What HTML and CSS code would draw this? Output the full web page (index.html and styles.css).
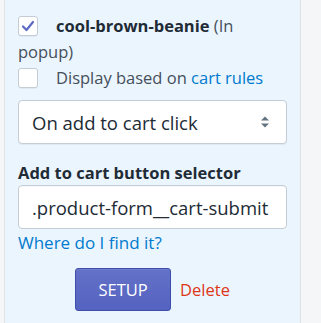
FILE: index.html
```html
<!DOCTYPE html>
<html lang="en">
<head>
  <meta charset="UTF-8" />
  <title>Popup settings</title>
  <link rel="stylesheet" href="styles.css">
</head>
<body>

<div class="panel">

  <div class="check-row">
    <span class="checkbox checked">
      <svg width="14" height="14" viewBox="0 0 14 14"><path d="M2 7.5 L5.5 11 L12 3" fill="none" stroke="#5c6ac4" stroke-width="2.2" stroke-linecap="round" stroke-linejoin="round"/></svg>
    </span><b>cool-brown-beanie</b> (In popup)
  </div>

  <div class="check-row">
    <span class="checkbox"></span>Display based on <a href="#">cart rules</a>
  </div>

  <div class="select-wrap">
    <select class="select">
      <option>On add to cart click</option>
      <option>On page load</option>
    </select>
    <svg class="select-arrows" width="10" height="14" viewBox="0 0 10 14">
      <path d="M1 5.5 L5 1.5 L9 5.5 Z" fill="#637381"/>
      <path d="M1 8.5 L5 12.5 L9 8.5 Z" fill="#637381"/>
    </svg>
  </div>

  <label class="field-label" for="selector">Add to cart button selector</label>
  <input class="text-input" type="text" id="selector" value=".product-form__cart-submit">
  <a class="help-link" href="#">Where do I find it?</a>

  <div class="actions">
    <button class="btn-primary">SETUP</button>
    <a class="delete-link" href="#">Delete</a>
  </div>

</div>

</body>
</html>
```

FILE: styles.css
```css
body {
  font-family: "Open Sans", Arial, sans-serif;
  background-color: #f4f6f8;
  margin: 0;
  padding: 0;
  color: #212b36;
}

.panel {
  margin-left: 4px;
  min-height: 323px;
  box-sizing: border-box;
  width: 297px;
  padding: 13px 13px 0 13px;
  background-color: #ebf5fe;
  border-left: 1px solid #dfe3e8;
  border-right: 1px solid #dfe3e8;
  font-size: 16.5px;
}

.check-row {
  line-height: 26px;
  color: #454f5b;
}

.check-row b {
  color: #212b36;
}

.checkbox {
  display: inline-block;
  box-sizing: border-box;
  width: 20px;
  height: 20px;
  margin-right: 18px;
  vertical-align: -4px;
  background: white;
  border: 1px solid #c4cdd5;
  border-radius: 3px;
  box-shadow: 0 1px 0 rgba(22, 29, 37, 0.05);
  position: relative;
}

.checkbox svg {
  position: absolute;
  left: 2px;
  top: 2px;
}

a {
  color: #007ace;
  text-decoration: none;
}

.select-wrap {
  position: relative;
  margin-top: 9px;
}

.select {
  display: block;
  appearance: none;
  -webkit-appearance: none;
  width: 100%;
  height: 44px;
  padding: 0 13px;
  border: 1px solid #c4cdd5;
  border-radius: 4px;
  background: white;
  font-family: inherit;
  font-size: 18.5px;
  color: #212b36;
  box-shadow: 0 1px 0 rgba(22, 29, 37, 0.05);
}

.select-arrows {
  position: absolute;
  right: 17px;
  top: 15px;
}

.field-label {
  display: block;
  margin-top: 18px;
  font-weight: bold;
  font-size: 16.5px;
  line-height: 22px;
}

.text-input {
  display: block;
  box-sizing: border-box;
  width: 100%;
  height: 44px;
  margin: 1px 0 0;
  padding: 0 13px;
  border: 1px solid #c4cdd5;
  border-radius: 4px;
  font-family: inherit;
  font-size: 18.5px;
  color: #212b36;
  box-shadow: inset 0 1px 0 rgba(99, 115, 129, 0.05);
}

.help-link {
  display: block;
  margin-top: 3px;
  font-size: 17px;
  line-height: 22px;
}

.actions {
  display: flex;
  justify-content: center;
  align-items: center;
  gap: 9px;
  margin-top: 14px;
}

.btn-primary {
  width: 96px;
  height: 43px;
  border: 1px solid #3f4eae;
  border-radius: 3px;
  background: linear-gradient(#6371c7, #5563c1);
  color: white;
  font-family: inherit;
  font-size: 16.5px;
  box-shadow: inset 0 1px 0 #6f7bcb;
}

.delete-link {
  color: #de3618;
  font-size: 16.5px;
}
```
